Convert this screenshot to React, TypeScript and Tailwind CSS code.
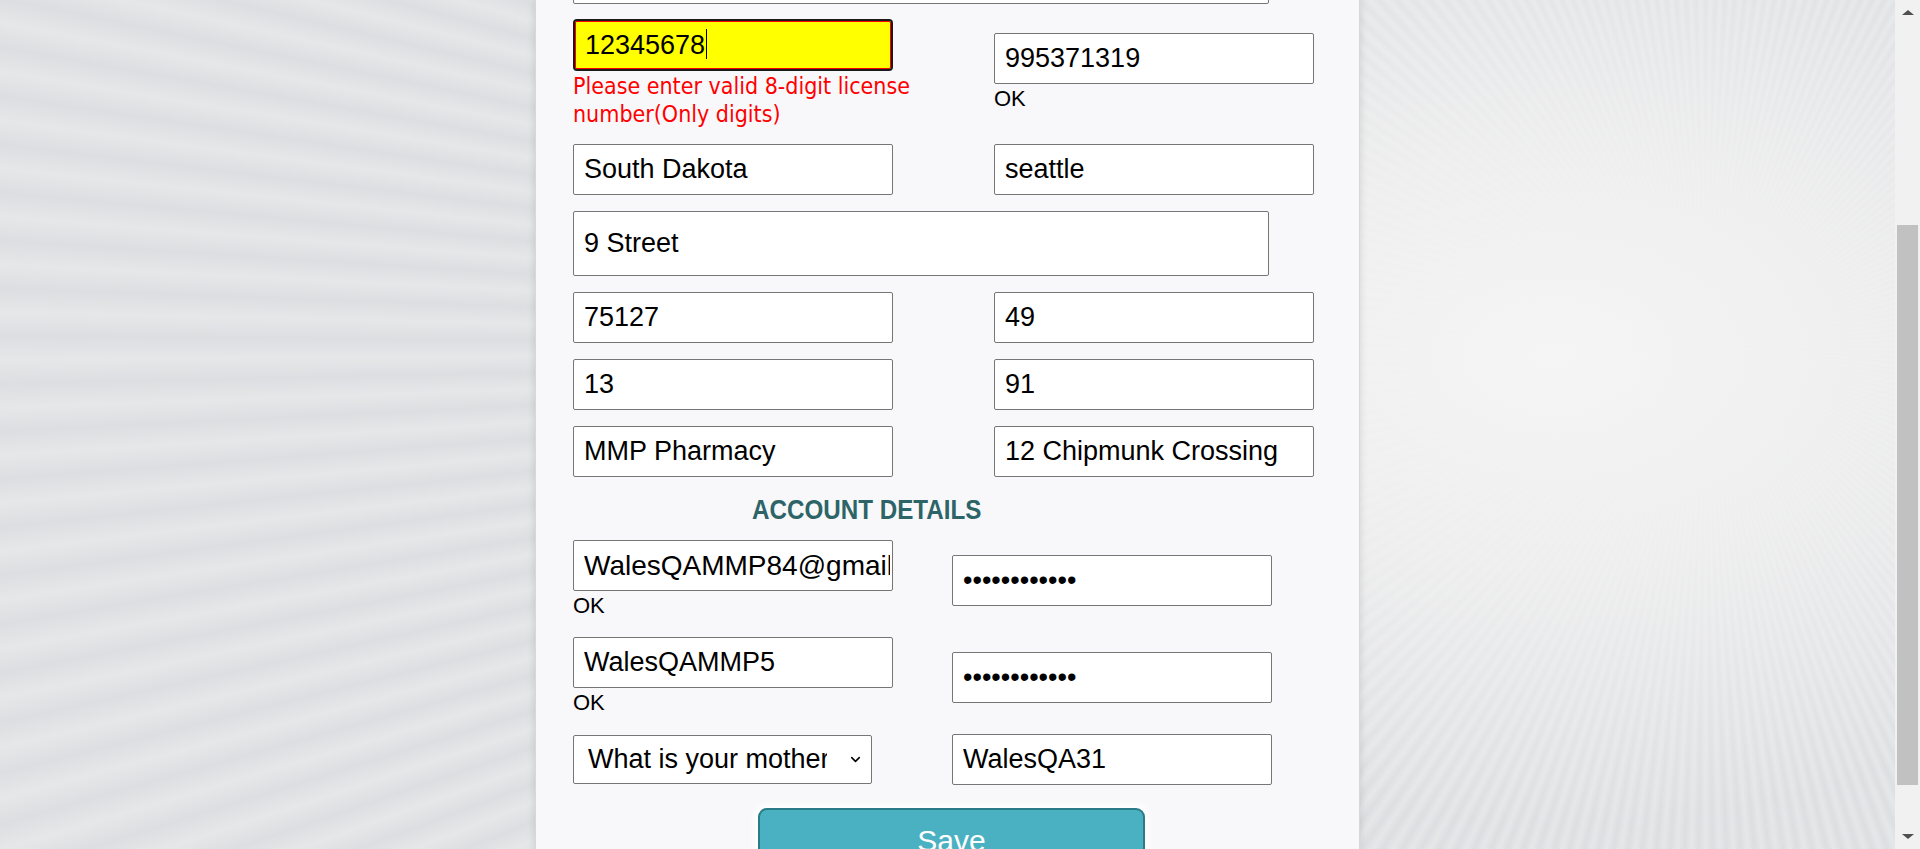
import React from "react";
import { ChevronDown } from "lucide-react";

const field =
  "h-[51px] w-[320px] rounded-[2px] border border-[#767676] bg-white pl-[10px] text-[27px] text-black font-['Liberation_Sans',Arial,sans-serif] outline-none";

const okText = "text-[22px] leading-[30px] text-black font-['Liberation_Sans',Arial,sans-serif]";

function Field({ value, className = "" }: { value: string; className?: string }) {
  return <input type="text" defaultValue={value} className={`${field} ${className}`} />;
}

function Scrollbar() {
  return (
    <div className="flex h-full w-[25px] shrink-0 flex-col bg-[#f1f1f1]">
      <div className="flex h-[25px] items-center justify-center">
        <div className="h-0 w-0 border-x-[6px] border-b-[5px] border-x-transparent border-b-[#505050]" />
      </div>
      <div className="flex-1 px-[2px]">
        <div className="mt-[200px] h-[560px] w-full bg-[#c1c1c1]" />
      </div>
      <div className="flex h-[25px] items-center justify-center">
        <div className="h-0 w-0 border-x-[6px] border-t-[5px] border-x-transparent border-t-[#505050]" />
      </div>
    </div>
  );
}

export default function App() {
  return (
    <div className="flex h-[849px] w-full overflow-hidden">
      <div className="flex flex-1 justify-center bg-[radial-gradient(ellipse_38%_55%_at_82%_42%,rgba(245,245,245,1)_0%,rgba(242,242,242,0.8)_45%,rgba(240,240,240,0)_100%),repeating-conic-gradient(from_0deg_at_90%_41%,#dddee1_0deg,#e6e7e9_0.8deg,#dddee1_1.6deg)]">
        <div className="h-full w-[825px] border-x border-[#d8d8d8] bg-[#f8f8fa] pl-[37px] shadow-[0_0_8px_rgba(0,0,0,0.12)]">
          {/* address line 1, mostly scrolled off */}
          <input
            type="text"
            defaultValue=""
            className={`${field} mt-[-47px] block w-[696px]`}
          />

          <div className="mt-[15px] grid grid-cols-[421px_320px] items-center gap-y-[16px]">
            <div>
              <div className="relative h-[52px] w-[320px]">
                <input
                  type="text"
                  defaultValue="12345678"
                  className="h-full w-full rounded-[4px] border-2 border-[#1a1a1a] bg-[#ffff00] pl-[10px] text-[27px] text-black font-['Liberation_Sans',Arial,sans-serif] shadow-[inset_0_0_0_1px_#ff0000] outline-none"
                />
                <span className="absolute left-[133px] top-[10px] h-[30px] w-px bg-black" />
              </div>
              <p className="mt-[1px] w-[345px] text-[23px] leading-[28px] text-[#ff0000] font-['Tahoma','DejaVu_Sans_Condensed',sans-serif]">
                Please enter valid 8-digit license number(Only digits)
              </p>
            </div>
            <div>
              <Field value="995371319" />
              <div className={okText}>OK</div>
            </div>

            <Field value="South Dakota" />
            <Field value="seattle" />

            <div className="col-span-2">
              <Field value="9 Street" className="h-[65px] w-[696px]" />
            </div>

            <Field value="75127" />
            <Field value="49" />

            <Field value="13" />
            <Field value="91" />

            <Field value="MMP Pharmacy" />
            <Field value="12 Chipmunk Crossing" />
          </div>

          <h3 className="mt-[17px] ml-[179px] h-[32px]">
            <span className="inline-block origin-left scale-x-[0.864] text-[28px] font-bold leading-[32px] text-[#2d6468] font-['Liberation_Sans',Arial,sans-serif] whitespace-nowrap">
              ACCOUNT DETAILS
            </span>
          </h3>

          <div className="mt-[14px] grid grid-cols-[379px_320px] items-center gap-y-[16px]">
            <div>
              <Field value="WalesQAMMP84@gmail.com" className="pr-[2px] text-[28px]" />
              <div className={okText}>OK</div>
            </div>
            <input type="password" defaultValue="WalesQA31!@#" className={field} />

            <div>
              <Field value="WalesQAMMP5" />
              <div className={okText}>OK</div>
            </div>
            <input type="password" defaultValue="WalesQA31!@#" className={field} />

            <div className="relative w-[299px]">
              <select
                defaultValue="mother"
                className="h-[49px] w-full appearance-none rounded-[2px] border border-[#767676] bg-white pl-[14px] pr-[44px] text-[27px] text-black font-['Liberation_Sans',Arial,sans-serif] outline-none"
              >
                <option value="mother">What is your mother's maiden name?</option>
                <option value="pet">What was the name of your first pet?</option>
              </select>
              <ChevronDown
                className="pointer-events-none absolute right-[9px] top-[17px] h-[15px] w-[15px] text-black"
                strokeWidth={2.5}
              />
            </div>
            <Field value="WalesQA31" />
          </div>

          <button className="mt-[23px] ml-[185px] h-[64px] w-[387px] rounded-[9px] border-2 border-[#2a7c88] bg-[#4ab1c2] text-[30px] text-white font-['Liberation_Sans',Arial,sans-serif] shadow-[0_0_6px_4px_#ffffff]">
            Save
          </button>
        </div>
      </div>
      <Scrollbar />
    </div>
  );
}
